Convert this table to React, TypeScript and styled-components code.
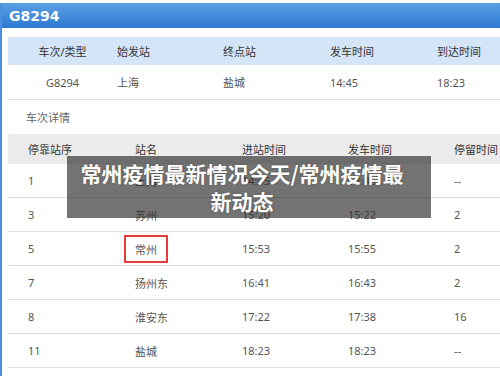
import React from 'react';
import styled, { createGlobalStyle } from 'styled-components';

interface IStop {
  seq: string;
  name: string;
  arrive: string;
  depart: string;
  stay: string;
  marked?: boolean;
}

const stops: IStop[] = [
  { seq: '1', name: '上海', arrive: '14:45', depart: '14:45', stay: '--' },
  { seq: '3', name: '苏州', arrive: '15:20', depart: '15:22', stay: '2' },
  { seq: '5', name: '常州', arrive: '15:53', depart: '15:55', stay: '2', marked: true },
  { seq: '7', name: '扬州东', arrive: '16:41', depart: '16:43', stay: '2' },
  { seq: '8', name: '淮安东', arrive: '17:22', depart: '17:38', stay: '16' },
  { seq: '11', name: '盐城', arrive: '18:23', depart: '18:23', stay: '--' },
];

const App = () => {
  return (
    <Page>
      <GlobalStyle />
      <Panel>
        <TitleBar>G8294</TitleBar>
        <Body>
          <InfoHead>
            <Cell $center>车次/类型</Cell>
            <Cell>始发站</Cell>
            <Cell>终点站</Cell>
            <Cell>发车时间</Cell>
            <Cell>到达时间</Cell>
          </InfoHead>
          <InfoRow>
            <Cell $center>G8294</Cell>
            <Cell>上海</Cell>
            <Cell>盐城</Cell>
            <Cell>14:45</Cell>
            <Cell>18:23</Cell>
          </InfoRow>
          <SectionLabel>车次详情</SectionLabel>
          <StopHead>
            <Cell>停靠站序</Cell>
            <Cell>站名</Cell>
            <Cell>进站时间</Cell>
            <Cell>发车时间</Cell>
            <Cell>停留时间</Cell>
          </StopHead>
          {stops.map((s) => (
            <StopRow key={s.seq}>
              <Cell>{s.seq}</Cell>
              <Cell>{s.marked ? <Marked>{s.name}</Marked> : s.name}</Cell>
              <Cell>{s.arrive}</Cell>
              <Cell>{s.depart}</Cell>
              <Cell>{s.stay}</Cell>
            </StopRow>
          ))}
        </Body>
      </Panel>
      <Caption>
        常州疫情最新情况今天/常州疫情最
        <br />
        新动态
      </Caption>
    </Page>
  );
};

export default App;

const GlobalStyle = createGlobalStyle`
  html, body {
    margin: 0;
    padding: 0;
    background: #fff;
    overflow: hidden;
  }
`;

const Page = styled.div`
  position: relative;
  width: 500px;
  height: 376px;
  overflow: hidden;
  font-family: 'Noto Sans', 'Noto Sans CJK SC', sans-serif;
`;

const Panel = styled.div`
  margin-top: 3px;
  width: 520px;
  height: 400px;
  border-left: 2px solid #4a8fdc;
  box-sizing: border-box;
`;

const TitleBar = styled.div`
  height: 25px;
  display: flex;
  align-items: center;
  padding-left: 7px;
  background: linear-gradient(#5b9fe3, #2d79d2);
  color: #fff;
  font-family: 'DejaVu Sans', sans-serif;
  font-weight: bold;
  font-size: 14px;
`;

const Body = styled.div`
  padding: 9px 0 0 6px;
  width: 492px;
`;

const Cell = styled.div<{ $center?: boolean }>`
  display: flex;
  align-items: center;
  justify-content: ${(p) => (p.$center ? 'center' : 'flex-start')};
  white-space: nowrap;
`;

const InfoHead = styled.div`
  display: grid;
  grid-template-columns: 109px 106px 107px 107px 1fr;
  height: 28px;
  background: #d3e5f7;
  color: #333;
  font-size: 11px;
`;

const InfoRow = styled(InfoHead)`
  height: 34px;
  background: #fff;
  color: #555;
  border-bottom: 1px solid #dcdcdc;
`;

const SectionLabel = styled.div`
  height: 35px;
  padding: 0 0 0 18px;
  display: flex;
  align-items: center;
  margin-top: -1px;
  color: #666;
  font-size: 11px;
`;

const StopHead = styled.div`
  display: grid;
  grid-template-columns: 107px 107px 106px 106px 1fr;
  padding-left: 20px;
  height: 30px;
  background: #ebebeb;
  color: #333;
  font-size: 11px;
`;

const StopRow = styled(StopHead)`
  height: 33px;
  background: #fff;
  color: #555;
  border-bottom: 1px solid #dcdcdc;
`;

const Marked = styled.span`
  margin-left: -11px;
  padding: 4px 9px;
  border: 2px solid #e63a3c;
`;

const Caption = styled.div`
  position: absolute;
  left: 67px;
  top: 156px;
  width: 364px;
  height: 62px;
  box-sizing: border-box;
  padding: 3px 25px 3px 11px;
  background: rgba(40, 40, 40, 0.65);
  color: #fff;
  font-family: 'Noto Sans CJK SC', sans-serif;
  font-weight: bold;
  font-size: 21px;
  line-height: 28px;
  text-align: center;
  white-space: nowrap;
  text-shadow: 0 0 2px rgba(0, 0, 0, 0.35);
`;
